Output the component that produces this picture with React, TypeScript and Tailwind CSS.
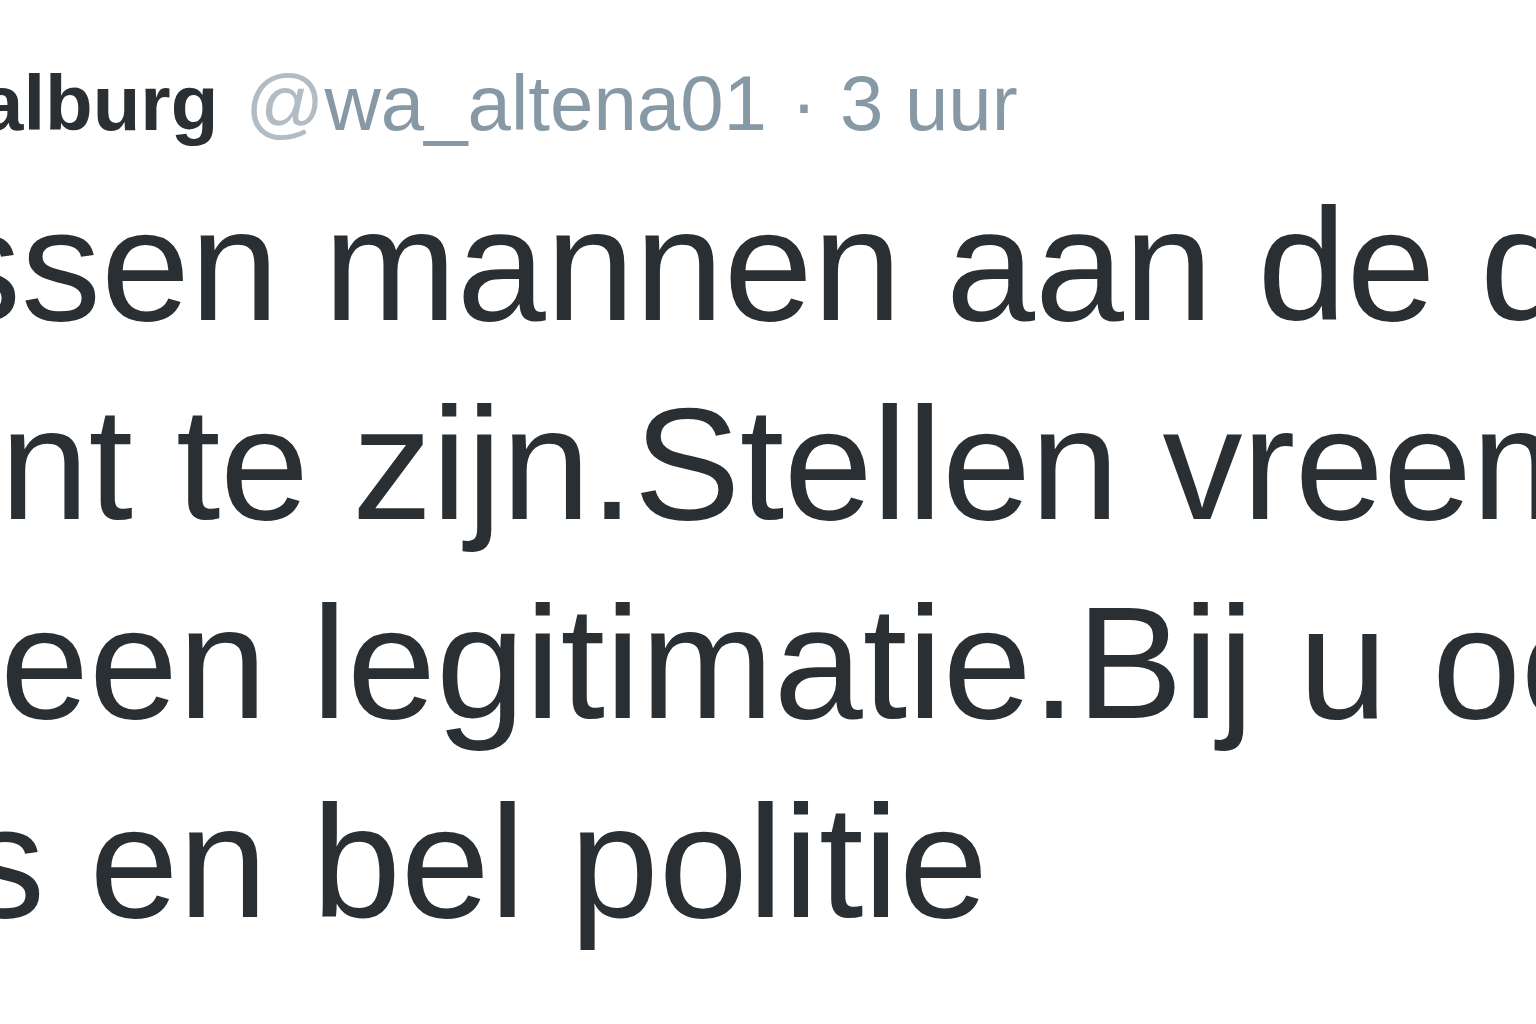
const lines: { text: string; offset: string }[] = [
  { text: 'ssen mannen aan de deur', offset: 'ml-[-59px]' },
  { text: 'nt te zijn.Stellen vreemde', offset: 'ml-[0px] tracking-[-0.6px]' },
  { text: 'een legitimatie.Bij u ook', offset: 'ml-[0px]' },
  { text: 's en bel politie', offset: 'ml-[-35px]' },
];

export default function App() {
  return (
    <div className="h-[1024px] w-[1536px] overflow-hidden bg-white font-['Liberation_Sans',Arial,sans-serif] text-[#292f33]">
      {/* Tweet header: name, handle, time */}
      <div className="mt-[58px] flex h-[90px] items-baseline whitespace-nowrap text-[78px] leading-[90px]">
        <span className="ml-[-20px] font-bold text-[#292f33]">alburg</span>
        <span className="ml-[27px] text-[#b1bcc4]">@</span>
        <span className="text-[#8899a6]">wa_altena01</span>
        <span className="ml-[24px] text-[#8899a6]">·</span>
        <span className="ml-[23px] text-[#8899a6]">3 uur</span>
      </div>

      {/* Tweet body */}
      <div className="mt-[17px] text-[160px] leading-[199px]">
        {lines.map((line) => (
          <div key={line.text} className={`whitespace-nowrap ${line.offset}`}>
            {line.text}
          </div>
        ))}
      </div>
    </div>
  );
}
